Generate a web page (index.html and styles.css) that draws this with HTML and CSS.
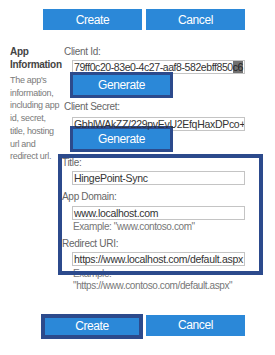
FILE: index.html
```html
<!DOCTYPE html>
<html lang='en'>

<head>
    <meta charset='UTF-8'>
    <meta name='viewport' content='width=device-width, initial-scale=1.0'>
    <title>App Information</title>
    <link rel="stylesheet" href="styles.css">
</head>

<body>
    <div class='page'>
        <div class='actions top'>
            <button type='button' class='btn'>Create</button>
            <button type='button' class='btn'>Cancel</button>
        </div>

        <div class='section'>
            <div class='intro'>
                <h2>App<br>Information</h2>
                <p>The app's<br>information,<br>including app<br>id, secret,<br>title, hosting<br>url and<br>redirect url.</p>
            </div>

            <div class='fields'>
                <label class='label'>Client Id:</label>
                <div class='field id-field'>79ff0c20-83e0-4c27-aaf8-582ebff850<span class='sel'>c6</span></div>
                <button type='button' class='btn gen'>Generate</button>

                <label class='label secret-label'>Client Secret:</label>
                <div class='field secret-field'>GbhlWAkZZ/229pvEvU2EfqHaxDPco+B5.</div>
                <button type='button' class='btn gen gen-2'>Generate</button>

                <div class='mark'>
                    <label class='label title-label'>Title:</label>
                    <div class='field title-field'>HingePoint-Sync</div>

                    <label class='label domain-label'>App Domain:</label>
                    <div class='field domain-field'>www.localhost.com</div>
                    <div class='hint'>Example: "www.contoso.com"</div>

                    <label class='label redirect-label'>Redirect URI:</label>
                    <div class='field redirect-field'>https://www.localhost.com/default.aspx</div>
                </div>
                <div class='hint under'>Example:<br>"https://www.contoso.com/default.aspx"</div>
            </div>
        </div>

        <div class='actions bottom'>
            <button type='button' class='btn marked'>Create</button>
            <button type='button' class='btn'>Cancel</button>
        </div>
    </div>
</body>

</html>
```

FILE: styles.css
```css
body {
    margin: 0;
    font-family: "Liberation Sans", Arial, sans-serif;
    color: #666;
    background-color: #fff;
}

.page {
    padding-top: 9px;
}

.actions {
    display: flex;
    align-items: flex-start;
    gap: 4px;
    padding-left: 43px;
}

.btn {
    width: 99px;
    height: 21px;
    padding: 0;
    border: none;
    background-color: #2b88d8;
    color: #fff;
    font-family: inherit;
    font-size: 12px;
    letter-spacing: -0.4px;
    cursor: pointer;
}

.section {
    display: flex;
    margin-top: 15px;
}

.intro {
    width: 52px;
    padding-left: 10px;
    flex-shrink: 0;
}

.intro h2 {
    margin: 0;
    font-size: 10px;
    letter-spacing: -0.3px;
    line-height: 13px;
    color: #444;
}

.intro p {
    margin: 3px 0 0;
    font-size: 9px;
    letter-spacing: -0.3px;
    line-height: 12.7px;
    color: #7a7a7a;
    white-space: nowrap;
}

.fields {
    flex: 1;
}

.label {
    display: block;
    padding-left: 2px;
    font-size: 10px;
    letter-spacing: -0.3px;
    line-height: 13px;
    color: #666;
}

.field {
    box-sizing: border-box;
    width: 173px;
    height: 14px;
    margin-left: 10px;
    margin-top: 1.5px;
    padding: 0 1px;
    border: 1px solid #c4c4c4;
    font-size: 10.5px;
    letter-spacing: -0.3px;
    line-height: 12px;
    color: #333;
    white-space: nowrap;
    overflow: hidden;
}

.id-field {
    letter-spacing: -0.42px;
}

.sel {
    background-color: #707070;
    color: #222;
}

.gen {
    display: block;
    box-sizing: border-box;
    width: 103px;
    height: 26px;
    margin-left: 8px;
    margin-top: -2px;
    border: 3px solid #2c4a8c;
}

.secret-label {
    margin-top: 2.5px;
}

.secret-field {
    margin-top: 3.5px;
}

.gen-2 {
    margin-top: -5px;
}

.mark {
    position: relative;
    box-sizing: border-box;
    width: 205px;
    margin-left: -4px;
    margin-top: 2px;
    padding-bottom: 5px;
    border: 4px solid #2c4a8c;
}

.mark .label {
    padding-left: 0;
}

.title-label {
    line-height: 10px;
}

.title-field {
    margin-top: 3px;
}

.domain-label {
    margin-top: 5.5px;
}

.domain-field {
    margin-top: 2.5px;
}

.hint {
    margin-left: 11px;
    margin-top: 1px;
    font-size: 10px;
    letter-spacing: -0.4px;
    line-height: 12px;
    color: #777;
    white-space: nowrap;
}

.redirect-label {
    margin-top: 4.5px;
}

.redirect-field {
    margin-top: 1.5px;
}

.hint.under {
    margin-top: -7px;
}

.bottom {
    margin-top: 23px;
}

.marked {
    box-sizing: border-box;
    width: 102px;
    height: 25px;
    margin-top: -1px;
    margin-left: -2px;
    margin-right: -1px;
    border: 4px solid #2c4a8c;
}
```
